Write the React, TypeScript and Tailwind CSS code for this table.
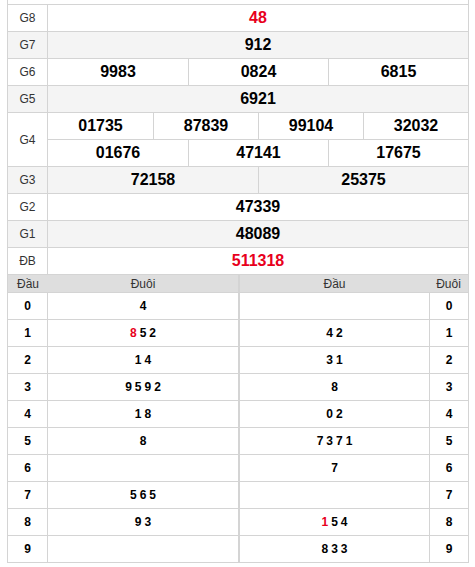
const font = { fontFamily: '"Liberation Sans", Arial, sans-serif' };

type Prize = { label: string; rows: string[][]; red?: boolean; gray?: boolean };

const prizes: Prize[] = [
  { label: 'G8', rows: [['48']], red: true },
  { label: 'G7', rows: [['912']], gray: true },
  { label: 'G6', rows: [['9983', '0824', '6815']] },
  { label: 'G5', rows: [['6921']], gray: true },
  { label: 'G4', rows: [['01735', '87839', '99104', '32032'], ['01676', '47141', '17675']] },
  { label: 'G3', rows: [['72158', '25375']], gray: true },
  { label: 'G2', rows: [['47339']] },
  { label: 'G1', rows: [['48089']], gray: true },
  { label: 'ĐB', rows: [['511318']], red: true },
];

const gridCols: Record<number, string> = {
  1: 'grid-cols-1',
  2: 'grid-cols-2',
  3: 'grid-cols-3',
  4: 'grid-cols-4',
};

// [digit, numbers, index of the red one]
const dau: [string, string[], number][] = [
  ['0', ['4'], -1],
  ['1', ['8', '5', '2'], 0],
  ['2', ['1', '4'], -1],
  ['3', ['9', '5', '9', '2'], -1],
  ['4', ['1', '8'], -1],
  ['5', ['8'], -1],
  ['6', [], -1],
  ['7', ['5', '6', '5'], -1],
  ['8', ['9', '3'], -1],
  ['9', [], -1],
];

const duoi: [string, string[], number][] = [
  ['0', [], -1],
  ['1', ['4', '2'], -1],
  ['2', ['3', '1'], -1],
  ['3', ['8'], -1],
  ['4', ['0', '2'], -1],
  ['5', ['7', '3', '7', '1'], -1],
  ['6', ['7'], -1],
  ['7', [], -1],
  ['8', ['1', '5', '4'], 0],
  ['9', ['8', '3', '3'], -1],
];

function Digits({ items, red }: { items: string[]; red: number }) {
  return (
    <span className="flex gap-[3px]">
      {items.map((d, i) => (
        <span key={i} className={i === red ? 'text-[#e8001c]' : 'text-black'}>
          {d}
        </span>
      ))}
    </span>
  );
}

export default function App() {
  return (
    <div className="bg-white w-[475px] h-[567px] pl-[7px] pr-[6px] overflow-hidden" style={font}>
      {/* cut-off row above */}
      <div className="h-[4px] border-x border-[#d4d4d4]" />

      <div className="border-x border-t border-[#d4d4d4]">
        {prizes.map((p) => (
          <div
            key={p.label}
            className={`flex border-b border-[#d4d4d4] ${p.gray ? 'bg-[#f4f4f4]' : 'bg-white'}`}
          >
            <div className="w-[40px] shrink-0 border-r border-[#d4d4d4] flex items-center justify-center text-[12px] text-[#333]">
              {p.label}
            </div>
            <div className="flex-1 flex flex-col">
              {p.rows.map((row, ri) => (
                <div
                  key={ri}
                  className={`grid ${gridCols[row.length]} h-[26px] ${ri > 0 ? 'border-t border-[#d4d4d4] h-[27px]' : ''}`}
                >
                  {row.map((n, ci) => (
                    <div
                      key={ci}
                      className={`flex items-center justify-center text-[16px] font-bold ${
                        ci > 0 ? 'border-l border-[#d4d4d4]' : ''
                      } ${p.red ? 'text-[#e8001c]' : 'text-black'}`}
                    >
                      {n}
                    </div>
                  ))}
                </div>
              ))}
            </div>
          </div>
        ))}
      </div>

      <div className="flex">
        {/* left: đầu */}
        <div className="w-[232px] border-x border-[#d4d4d4]">
          <div className="flex h-[18px] bg-[#dedede] border-b border-[#d4d4d4] text-[12px] text-[#333]">
            <div className="w-[40px] shrink-0 flex items-center justify-center">Đầu</div>
            <div className="flex-1 flex items-center justify-center">Đuôi</div>
          </div>
          {dau.map(([d, items, red]) => (
            <div key={d} className="flex h-[27px] border-b border-[#d4d4d4] text-[12px] font-bold">
              <div className="w-[40px] shrink-0 border-r border-[#d4d4d4] flex items-center justify-center text-black">
                {d}
              </div>
              <div className="flex-1 flex items-center justify-center">
                <Digits items={items} red={red} />
              </div>
            </div>
          ))}
        </div>
        {/* right: đuôi */}
        <div className="w-[230px] border-x border-[#d4d4d4]">
          <div className="flex h-[18px] bg-[#dedede] border-b border-[#d4d4d4] text-[12px] text-[#333]">
            <div className="flex-1 flex items-center justify-center">Đầu</div>
            <div className="w-[39px] shrink-0 flex items-center justify-center">Đuôi</div>
          </div>
          {duoi.map(([d, items, red]) => (
            <div key={d} className="flex h-[27px] border-b border-[#d4d4d4] text-[12px] font-bold">
              <div className="flex-1 flex items-center justify-center">
                <Digits items={items} red={red} />
              </div>
              <div className="w-[39px] shrink-0 border-l border-[#d4d4d4] flex items-center justify-center text-black">
                {d}
              </div>
            </div>
          ))}
        </div>
      </div>
    </div>
  );
}
